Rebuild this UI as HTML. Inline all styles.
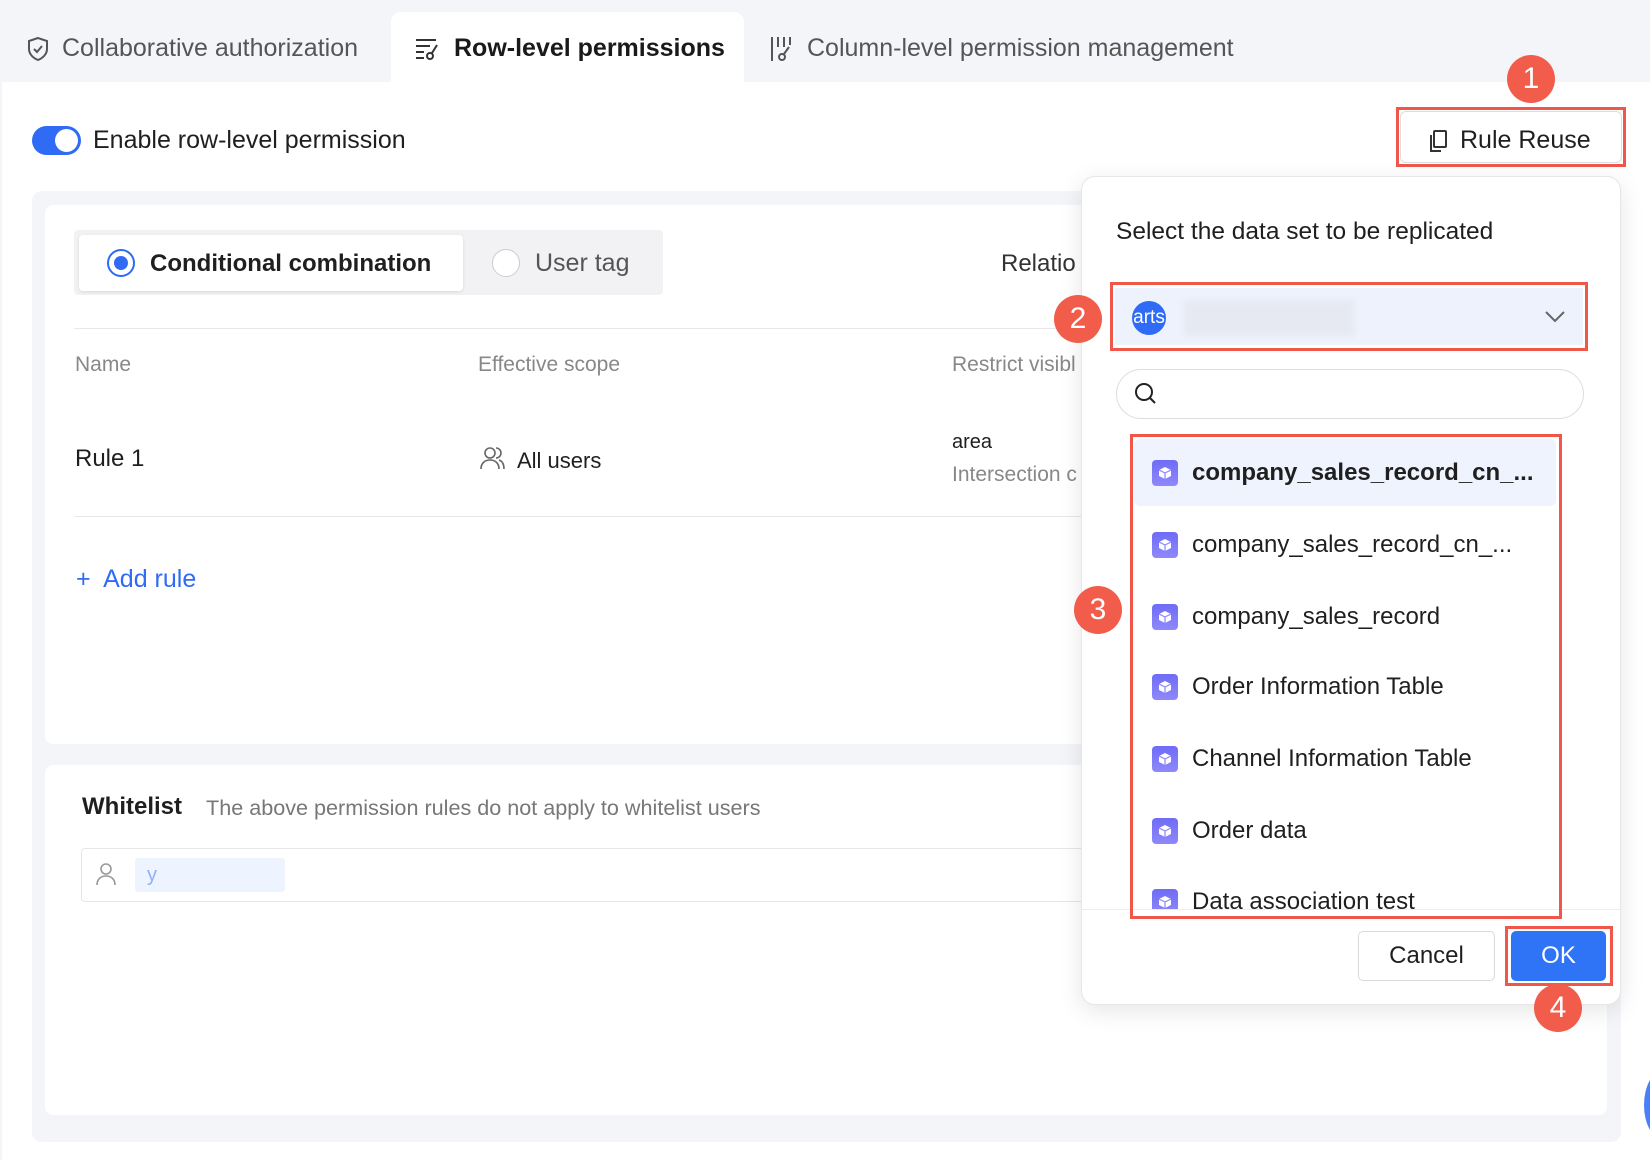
<!DOCTYPE html>
<html><head><meta charset="utf-8"><style>
*{box-sizing:border-box;margin:0;padding:0}
body{width:1650px;height:1160px;background:#f4f5f9;font-family:"Liberation Sans",sans-serif;position:relative;overflow:hidden;color:#1f1f1f}
.a{position:absolute}
.tab{position:absolute;top:34px;font-size:25px;color:#555;display:flex;align-items:center;gap:12px}
.badge{position:absolute;width:48px;height:48px;border-radius:50%;background:#f25c4a;color:#fff;font-size:30px;display:flex;align-items:center;justify-content:center}
.red{position:absolute;border:3px solid #f0574a}
.item{position:absolute;left:1152px;font-size:24px;display:flex;align-items:center;gap:14px;color:#1f1f1f}
.ic{width:26px;height:26px;border-radius:4px;background:linear-gradient(#6f6cf6,#8f88fb);display:flex;align-items:center;justify-content:center}
</style></head><body>
<div class="a" style="left:391px;top:12px;width:353px;height:80px;background:#fff;border-radius:10px 10px 0 0"></div>
<div class="a" style="left:2px;top:82px;width:1648px;height:1078px;background:#fff"></div>
<div class="tab" style="left:26px"><svg width="24" height="26" viewBox="0 0 24 26"><path d="M12 2L3 5v8c0 5 4 9 9 11c5-2 9-6 9-11V5z" fill="none" stroke="#555" stroke-width="2"/><path d="M8 13l3 3 5-6" fill="none" stroke="#555" stroke-width="2"/></svg>Collaborative authorization</div>
<div class="tab" style="left:414px;color:#1a1a1a;font-weight:bold"><svg width="28" height="26" viewBox="0 0 28 26"><path d="M2 4h20M2 10h14M2 16h8M2 22h8" stroke="#333" stroke-width="2"/><circle cx="16" cy="20" r="3" fill="none" stroke="#333" stroke-width="2"/><path d="M18 17l5-8" stroke="#333" stroke-width="2"/></svg>Row-level permissions</div>
<div class="tab" style="left:769px"><svg width="26" height="28" viewBox="0 0 26 28"><path d="M3 2v24M9 2v10M15 2v10M21 2v8" stroke="#555" stroke-width="2"/><circle cx="13" cy="22" r="3" fill="none" stroke="#555" stroke-width="2"/><path d="M15 19l5-7" stroke="#555" stroke-width="2"/></svg>Column-level permission management</div>

<div class="a" style="left:32px;top:126px;width:49px;height:29px;border-radius:15px;background:#2f6bf5"></div>
<div class="a" style="left:55px;top:129px;width:23px;height:23px;border-radius:50%;background:#fff"></div>
<div class="a" style="left:93px;top:126px;font-size:25px">Enable row-level permission</div>

<div class="a" style="left:1400px;top:111px;width:222px;height:52px;border:1px solid #ddd;border-radius:6px;background:#fff"></div>
<div class="a" style="left:1428px;top:126px;font-size:25px;display:flex;align-items:center;gap:12px"><svg width="20" height="24" viewBox="0 0 20 24"><rect x="6" y="2" width="12" height="16" rx="1" fill="none" stroke="#333" stroke-width="2"/><path d="M3 6v16h10" fill="none" stroke="#333" stroke-width="2"/></svg>Rule Reuse</div>
<div class="red" style="left:1396px;top:107px;width:230px;height:60px"></div>
<div class="badge" style="left:1507px;top:55px">1</div>

<div class="a" style="left:32px;top:191px;width:1589px;height:951px;background:#f4f5f9;border-radius:10px"></div>
<div class="a" style="left:45px;top:205px;width:1562px;height:539px;background:#fff;border-radius:8px"></div>
<div class="a" style="left:74px;top:230px;width:589px;height:65px;background:#f2f2f4;border-radius:4px"></div>
<div class="a" style="left:79px;top:235px;width:384px;height:56px;background:#fff;border-radius:4px;box-shadow:0 1px 3px rgba(0,0,0,.1)"></div>
<div class="a" style="left:107px;top:249px;width:28px;height:28px;border-radius:50%;border:2px solid #2f6bf5"></div>
<div class="a" style="left:114px;top:256px;width:14px;height:14px;border-radius:50%;background:#2f6bf5"></div>
<div class="a" style="left:150px;top:250px;font-size:24px;font-weight:bold">Conditional combination</div>
<div class="a" style="left:492px;top:249px;width:28px;height:28px;border-radius:50%;border:1px solid #ccc;background:#fff"></div>
<div class="a" style="left:535px;top:249px;font-size:25px;color:#555">User tag</div>
<div class="a" style="left:1001px;top:250px;font-size:24px;color:#333">Relatio</div>
<div class="a" style="left:74px;top:328px;width:1010px;height:1px;background:#e8e8e8"></div>
<div class="a" style="left:75px;top:353px;font-size:21px;color:#888">Name</div>
<div class="a" style="left:478px;top:353px;font-size:21px;color:#888">Effective scope</div>
<div class="a" style="left:952px;top:353px;font-size:21px;color:#888">Restrict visibl</div>
<div class="a" style="left:75px;top:445px;font-size:24px">Rule 1</div>
<svg class="a" style="left:479px;top:445px" width="26" height="26" viewBox="0 0 26 26"><circle cx="11" cy="8" r="5" fill="none" stroke="#666" stroke-width="1.6"/><path d="M2 24c0-6 4-9 9-9s9 3 9 9M17 3a5 5 0 0 1 0 10M20 15c3 1 5 4 5 9" fill="none" stroke="#666" stroke-width="1.6"/></svg>
<div class="a" style="left:517px;top:448px;font-size:22px">All users</div>
<div class="a" style="left:952px;top:431px;font-size:20px">area</div>
<div class="a" style="left:952px;top:463px;font-size:21px;color:#888">Intersection c</div>
<div class="a" style="left:74px;top:516px;width:1010px;height:1px;background:#e8e8e8"></div>
<div class="a" style="left:76px;top:565px;font-size:25px;color:#2f6bf5"><span style="font-weight:300">+</span>&nbsp; Add rule</div>

<div class="a" style="left:45px;top:765px;width:1562px;height:350px;background:#fff;border-radius:8px"></div>
<div class="a" style="left:82px;top:793px;font-size:24px;font-weight:bold">Whitelist</div>
<div class="a" style="left:206px;top:795px;font-size:21.6px;color:#777">The above permission rules do not apply to whitelist users</div>
<div class="a" style="left:81px;top:848px;width:1060px;height:54px;border:1px solid #e6e6e6;border-radius:4px"></div>
<svg class="a" style="left:95px;top:862px" width="22" height="24" viewBox="0 0 22 24"><circle cx="11" cy="7" r="5" fill="none" stroke="#999" stroke-width="1.6"/><path d="M2 23c0-6 4-9 9-9s9 3 9 9" fill="none" stroke="#999" stroke-width="1.6"/></svg>
<div class="a" style="left:135px;top:858px;width:150px;height:34px;background:#eef4ff;border-radius:3px;color:#8fb0f5;font-size:20px;padding:6px 12px">y</div>

<div class="a" style="left:1081px;top:176px;width:540px;height:829px;background:#fff;border:1px solid #e6e6e6;border-radius:14px;box-shadow:0 6px 24px rgba(0,0,0,.1)"></div>
<div class="a" style="left:1116px;top:218px;font-size:24.5px">Select the data set to be replicated</div>
<div class="a" style="left:1115px;top:288px;width:468px;height:57px;background:#eef2fd"></div>
<div class="a" style="left:1132px;top:301px;width:34px;height:34px;border-radius:50%;background:#2f6bf5;color:#fff;font-size:19px;line-height:34px;overflow:hidden;text-align:center">arts</div>
<div class="a" style="left:1184px;top:300px;width:170px;height:36px;background:#e6e9f2;filter:blur(3px)"></div>
<svg class="a" style="left:1544px;top:310px" width="22" height="14" viewBox="0 0 22 14"><path d="M2 2l9 9 9-9" fill="none" stroke="#666" stroke-width="2"/></svg>
<div class="red" style="left:1110px;top:282px;width:478px;height:69px"></div>
<div class="badge" style="left:1054px;top:295px">2</div>
<div class="a" style="left:1116px;top:369px;width:468px;height:50px;border:1px solid #ddd;border-radius:25px"></div>
<svg class="a" style="left:1134px;top:382px" width="24" height="24" viewBox="0 0 24 24"><circle cx="10" cy="10" r="8" fill="none" stroke="#222" stroke-width="2"/><path d="M16 16l5 5" stroke="#222" stroke-width="2"/></svg>
<div class="a" style="left:1134px;top:439px;width:422px;height:67px;background:#eef3fd;border-radius:6px"></div>
<div class="a" style="left:1081px;top:440px;width:540px;height:469px;overflow:hidden">
<div class="item" style="left:71px;top:19px;font-weight:bold"><div class="ic"><svg width="14" height="14" viewBox="0 0 14 14"><path d="M7 1l6 3v6l-6 3-6-3V4z" fill="#fff"/><path d="M1 4l6 3 6-3M7 7v6" stroke="#8a86f8" stroke-width="1.2" fill="none"/></svg></div>company_sales_record_cn_...</div>
<div class="item" style="left:71px;top:91px"><div class="ic"><svg width="14" height="14" viewBox="0 0 14 14"><path d="M7 1l6 3v6l-6 3-6-3V4z" fill="#fff"/><path d="M1 4l6 3 6-3M7 7v6" stroke="#8a86f8" stroke-width="1.2" fill="none"/></svg></div>company_sales_record_cn_...</div>
<div class="item" style="left:71px;top:163px"><div class="ic"><svg width="14" height="14" viewBox="0 0 14 14"><path d="M7 1l6 3v6l-6 3-6-3V4z" fill="#fff"/><path d="M1 4l6 3 6-3M7 7v6" stroke="#8a86f8" stroke-width="1.2" fill="none"/></svg></div>company_sales_record</div>
<div class="item" style="left:71px;top:233px"><div class="ic"><svg width="14" height="14" viewBox="0 0 14 14"><path d="M7 1l6 3v6l-6 3-6-3V4z" fill="#fff"/><path d="M1 4l6 3 6-3M7 7v6" stroke="#8a86f8" stroke-width="1.2" fill="none"/></svg></div>Order Information Table</div>
<div class="item" style="left:71px;top:305px"><div class="ic"><svg width="14" height="14" viewBox="0 0 14 14"><path d="M7 1l6 3v6l-6 3-6-3V4z" fill="#fff"/><path d="M1 4l6 3 6-3M7 7v6" stroke="#8a86f8" stroke-width="1.2" fill="none"/></svg></div>Channel Information Table</div>
<div class="item" style="left:71px;top:377px"><div class="ic"><svg width="14" height="14" viewBox="0 0 14 14"><path d="M7 1l6 3v6l-6 3-6-3V4z" fill="#fff"/><path d="M1 4l6 3 6-3M7 7v6" stroke="#8a86f8" stroke-width="1.2" fill="none"/></svg></div>Order data</div>
<div class="item" style="left:71px;top:448px"><div class="ic"><svg width="14" height="14" viewBox="0 0 14 14"><path d="M7 1l6 3v6l-6 3-6-3V4z" fill="#fff"/><path d="M1 4l6 3 6-3M7 7v6" stroke="#8a86f8" stroke-width="1.2" fill="none"/></svg></div>Data association test</div>
</div>
<div class="a" style="left:1082px;top:909px;width:538px;height:1px;background:#eee"></div>
<div class="red" style="left:1130px;top:434px;width:432px;height:485px"></div>
<div class="badge" style="left:1074px;top:586px">3</div>
<div class="a" style="left:1358px;top:931px;width:137px;height:50px;border:1px solid #d9d9d9;border-radius:5px;font-size:24px;text-align:center;line-height:48px">Cancel</div>
<div class="a" style="left:1511px;top:931px;width:95px;height:50px;background:#2f74f6;border-radius:5px;font-size:24px;color:#fff;text-align:center;line-height:50px">OK</div>
<div class="red" style="left:1505px;top:926px;width:108px;height:60px"></div>
<div class="badge" style="left:1534px;top:984px">4</div>
<div class="a" style="left:1644px;top:1070px;width:40px;height:70px;border-radius:50%;background:#4a7ff5"></div>
</body></html>
